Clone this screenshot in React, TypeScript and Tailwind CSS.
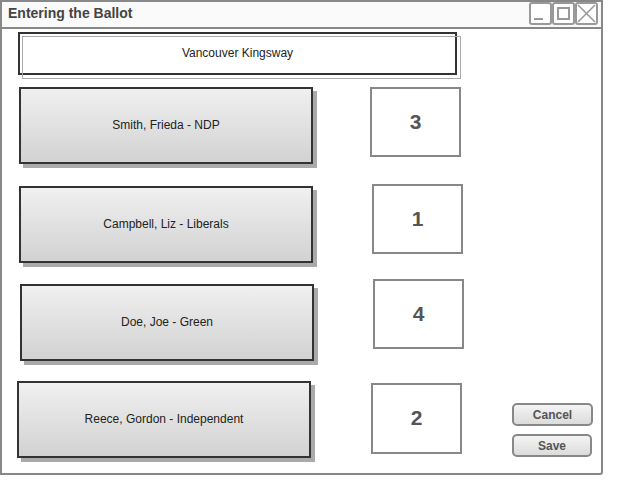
import React from "react";

type Row = {
  label: string;
  rank: number;
  // small offsets, the mockup was drawn by hand
  rowTop: string;
  btnLeft: string;
  boxLeft: string;
  boxTop: string;
  boxH: string;
};

const rows: Row[] = [
  { label: "Smith, Frieda - NDP", rank: 3, rowTop: "mt-[12px]", btnLeft: "ml-[17px]", boxLeft: "ml-[57px]", boxTop: "mt-0", boxH: "h-[70px]" },
  { label: "Campbell, Liz - Liberals", rank: 1, rowTop: "mt-[22px]", btnLeft: "ml-[17px]", boxLeft: "ml-[59px]", boxTop: "-mt-[2px]", boxH: "h-[70px]" },
  { label: "Doe, Joe - Green", rank: 4, rowTop: "mt-[21px]", btnLeft: "ml-[18px]", boxLeft: "ml-[59px]", boxTop: "-mt-[5px]", boxH: "h-[70px]" },
];

function WinButton({ kind }: { kind: "min" | "max" | "close" }) {
  return (
    <div className="w-[23px] h-[23px] border-2 border-[#999] rounded-[3px] bg-white">
      <svg width="19" height="19" viewBox="0 0 19 19" className="block">
        {kind === "min" && <line x1="3" y1="15" x2="12" y2="15" stroke="#999" strokeWidth="2" />}
        {kind === "max" && <rect x="4" y="4" width="11" height="11" fill="none" stroke="#999" strokeWidth="2" />}
        {kind === "close" && (
          <g stroke="#999" strokeWidth="1.6">
            <line x1="1" y1="1" x2="18" y2="18" />
            <line x1="18" y1="1" x2="1" y2="18" />
          </g>
        )}
      </svg>
    </div>
  );
}

function Candidate({ label }: { label: string }) {
  return (
    <div className="w-[294px] h-[77px] border-2 border-[#333] bg-gradient-to-b from-[#f0f0f0] to-[#d2d2d2] shadow-[4px_4px_0_#aaaaaa] flex items-center justify-center text-[12px] text-[#222] pb-[1px]">
      {label}
    </div>
  );
}

function RankBox({ rank, h }: { rank: number; h: string }) {
  return (
    <div className={`w-[91px] ${h} border-2 border-[#888] flex items-center justify-center text-[21px] font-bold text-[#555] pb-[1px]`}>
      {rank}
    </div>
  );
}

export default function App() {
  return (
    <div className="w-[622px] h-[495px] bg-white font-['Liberation_Sans',Arial,sans-serif]">
      <div className="w-[603px] h-[475px] border-2 border-[#888] rounded-br-[3px] flex flex-col">
        {/* title bar */}
        <div className="h-[27px] border-b-2 border-[#888] bg-[#fafafa] flex items-center pl-[6px] pr-[3px]">
          <span className="text-[14px] font-bold text-[#444] -mt-[3px]">Entering the Ballot</span>
          <div className="ml-auto flex -mt-[2px]">
            <WinButton kind="min" />
            <WinButton kind="max" />
            <WinButton kind="close" />
          </div>
        </div>

        <div className="flex-1 flex flex-col">
          {/* riding name */}
          <div className="relative ml-[16px] mt-[3px] w-[439px] h-[43px] border-2 border-[#333] flex items-center justify-center text-[12px] text-[#222]">
            <div className="absolute left-[2px] top-[2px] w-[439px] h-[43px] border border-[#aaa]" />
            <span className="relative -mt-[1px]">Vancouver Kingsway</span>
          </div>

          {rows.map((r) => (
            <div key={r.label} className={`flex items-start ${r.rowTop}`}>
              <div className={r.btnLeft}>
                <Candidate label={r.label} />
              </div>
              <div className={`${r.boxLeft} ${r.boxTop}`}>
                <RankBox rank={r.rank} h={r.boxH} />
              </div>
            </div>
          ))}

          <div className="flex items-start mt-[20px]">
            <div className="ml-[15px]">
              <Candidate label="Reece, Gordon - Independent" />
            </div>
            <div className="ml-[60px] mt-[2px]">
              <RankBox rank={2} h="h-[71px]" />
            </div>
            <div className="ml-auto mr-[8px] mt-[22px] flex flex-col gap-[8px]">
              <button className="w-[81px] h-[23px] border-2 border-[#888] rounded-[5px] bg-gradient-to-b from-[#f4f4f4] to-[#dcdcdc] text-[12px] font-bold text-[#555] leading-none">
                Cancel
              </button>
              <button className="w-[80px] h-[23px] border-2 border-[#888] rounded-[5px] bg-gradient-to-b from-[#f4f4f4] to-[#dcdcdc] text-[12px] font-bold text-[#555] leading-none">
                Save
              </button>
            </div>
          </div>
        </div>
      </div>
    </div>
  );
}
